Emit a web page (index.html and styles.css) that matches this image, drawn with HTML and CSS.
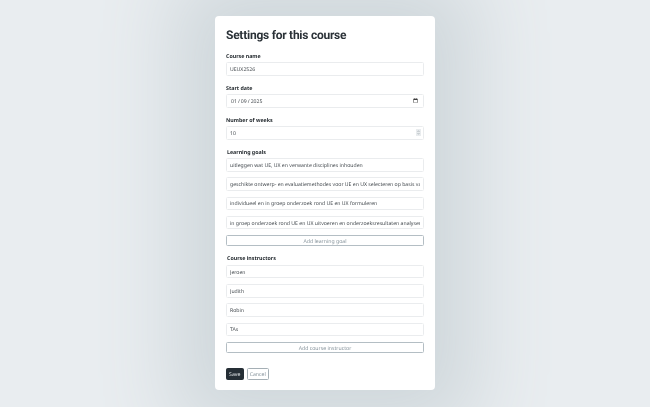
FILE: index.html
```html
<!DOCTYPE html>
<html lang="en">
<head>
    <meta charset="UTF-8">
    <meta name="viewport" content="width=device-width, initial-scale=1.0">
    <title>Course settings</title>
    <link rel="stylesheet" href="styles.css">
</head>
<body>
    <main class="card">
        <h1>Settings for this course</h1>
        <form>
            <div class="field">
                <label>Course name</label>
                <input class="control" type="text" value="UEUX2526">
            </div>
            <div class="field">
                <label>Start date</label>
                <input class="control" type="date" value="2025-01-09">
            </div>
            <div class="field">
                <label>Number of weeks</label>
                <div class="number-wrap">
                    <input class="control" type="number" value="10">
                    <svg class="spinner" viewBox="0 0 5 7" width="5" height="7">
                        <rect width="5" height="7" fill="#e9ecee"/>
                        <path d="M1.5 3 2.5 1.7 3.500 3M1.500 4 2.500 5.300 3.500 4" fill="none" stroke="#8f989e" stroke-width=".5"/>
                    </svg>
                </div>
            </div>
            <div class="field">
                <label class="list-label">Learning goals</label>
                <div class="list">
                    <input class="control" type="text" value="uitleggen wat UE, UX en verwante disciplines inhouden">
                    <input class="control" type="text" value="geschikte ontwerp- en evaluatiemethodes voor UE en UX selecteren op basis van de context">
                    <input class="control" type="text" value="individueel en in groep onderzoek rond UE en UX formuleren">
                    <input class="control" type="text" value="in groep onderzoek rond UE en UX uitvoeren en onderzoeksresultaten analyseren">
                    <button class="add" type="button">Add learning goal</button>
                </div>
            </div>
            <div class="field">
                <label class="list-label">Course instructors</label>
                <div class="list">
                    <input class="control" type="text" value="Jeroen">
                    <input class="control" type="text" value="Judith">
                    <input class="control" type="text" value="Robin">
                    <input class="control" type="text" value="TAs">
                    <button class="add" type="button">Add course instructor</button>
                </div>
            </div>
            <div class="actions">
                <button class="save" type="submit">Save</button>
                <button class="cancel" type="button">Cancel</button>
            </div>
        </form>
    </main>
</body>
</html>
```

FILE: styles.css
```css
html, body {
    height: 100%;
}
body {
    margin: 0;
    overflow: hidden;
    background-color: #e9edf0;
    font-family: "Noto Sans", sans-serif;
    color: #262c31;
    text-rendering: geometricPrecision;
}
.card {
    box-sizing: border-box;
    width: 220px;
    height: 374px;
    margin: 16px auto 0;
    padding: 11px;
    background-color: #fff;
    border-radius: 4px;
    box-shadow: 0 0 80px 40px #cfd7db;
}
h1 {
    margin: 0 0 9px;
    font-family: Roboto, sans-serif;
    font-size: 12px;
    letter-spacing: -0.250px;
    line-height: 16px;
    font-weight: 700;
    color: #2b3238;
    will-change: transform;
}
form {
    will-change: transform;
}
.field {
    margin-bottom: 8px;
}
label {
    display: block;
    height: 8px;
    margin-bottom: 2.300px;
    font-size: 5.300px;
    line-height: 8px;
    font-weight: 700;
}
.list-label {
    padding-left: 1px;
}
.control {
    display: block;
    box-sizing: border-box;
    width: 100%;
    height: 13.600px;
    padding: 0 3px;
    font-family: inherit;
    font-size: 5.150px;
    text-rendering: geometricPrecision;
    color: #454b50;
    background-color: #fff;
    border: 0.5px solid #eaecee;
    border-radius: 1.500px;
    outline: none;
}
.number-wrap {
    position: relative;
}
input[type=number]::-webkit-inner-spin-button {
    display: none;
}
.spinner {
    position: absolute;
    top: 3.300px;
    right: 3.500px;
}
.list {
    display: flex;
    flex-direction: column;
    gap: 5.700px;
}
.add {
    height: 11.400px;
    padding: 0;
    font-family: inherit;
    font-size: 5.200px;
    text-rendering: geometricPrecision;
    color: #87949c;
    background-color: #fff;
    border: 0.7px solid #b4bec4;
    border-radius: 1.500px;
}
.actions {
    display: flex;
    gap: 3px;
    margin-top: 14.800px;
}
.actions button {
    height: 11.600px;
    padding: 0;
    font-family: inherit;
    font-size: 5.200px;
    text-rendering: geometricPrecision;
    border-radius: 1.500px;
}
.save {
    width: 17.500px;
    color: #dfe3e5;
    background-color: #252e35;
    border: 0.5px solid #252e35;
}
.cancel {
    width: 22.500px;
    color: #87949c;
    background-color: #fff;
    border: 0.5px solid #a5afb5;
}
```
